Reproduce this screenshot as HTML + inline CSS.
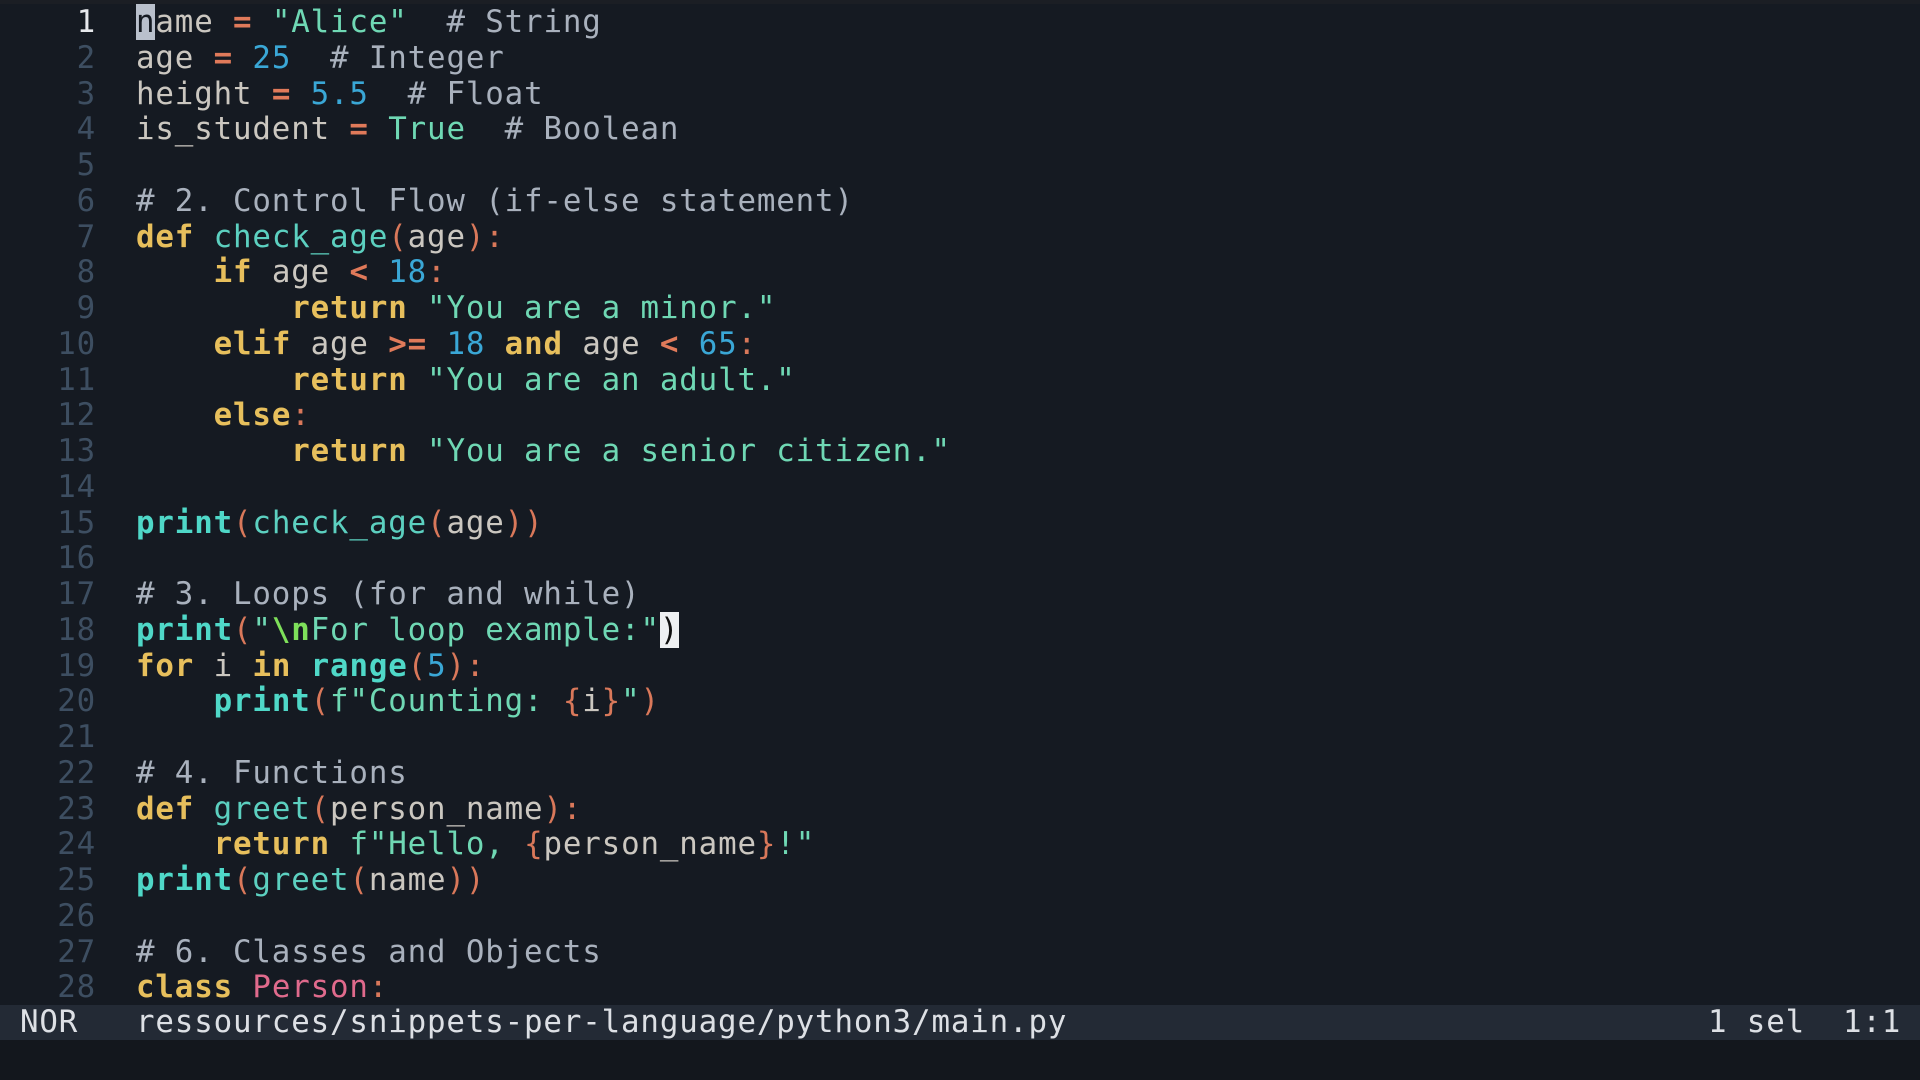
<!DOCTYPE html>
<html><head><meta charset="utf-8"><style>
html,body{margin:0;padding:0;width:1920px;height:1080px;overflow:hidden;background:#151a22;}
body{font-family:"DejaVu Sans Mono","Liberation Mono",monospace;font-size:30.8px;color:#cbc7c0;letter-spacing:0.86px}
#top{position:absolute;left:0;top:0;width:1920px;height:4px;background:#1b1e24}
#code{position:absolute;left:0;top:5px;}
.l{height:35.75px;line-height:35.75px;white-space:pre;position:relative}
.n{position:absolute;left:0;width:96px;text-align:right;color:#3d4e61}
.t{position:absolute;left:136px}
.cur{color:#e6e8ec}
.k{color:#e7bf5c;font-weight:bold}
.f{color:#4fd8c8;font-weight:bold}
.fn{color:#5cd0c0}
.s{color:#6fd8b4}
.e{color:#7ee05a;font-weight:bold}
.d{color:#3aa7d6}
.o{color:#e07a5a;font-weight:bold}
.p{color:#d9785a}
.c{color:#a9b1bd}
.cl{color:#e06a8c}
.bc{background:#b9c0cc;color:#151a22}
.wc{background:#eef0f2;color:#111}
#status{position:absolute;left:0;top:1005px;width:1920px;height:35px;background:#232a35;line-height:35px;white-space:pre;color:#dde0e5}
#bot{position:absolute;left:0;top:1040px;width:1920px;height:40px;background:#13171d}
</style></head><body>
<div id="top"></div>
<div id="code">
<div class="l"><span class="n cur">1</span><span class="t"><span class="bc">n</span>ame <span class="o">=</span> <span class="s">"Alice"</span>  <span class="c"># String</span></span></div>
<div class="l"><span class="n">2</span><span class="t">age <span class="o">=</span> <span class="d">25</span>  <span class="c"># Integer</span></span></div>
<div class="l"><span class="n">3</span><span class="t">height <span class="o">=</span> <span class="d">5.5</span>  <span class="c"># Float</span></span></div>
<div class="l"><span class="n">4</span><span class="t">is_student <span class="o">=</span> <span class="s">True</span>  <span class="c"># Boolean</span></span></div>
<div class="l"><span class="n">5</span><span class="t"></span></div>
<div class="l"><span class="n">6</span><span class="t"><span class="c"># 2. Control Flow (if-else statement)</span></span></div>
<div class="l"><span class="n">7</span><span class="t"><span class="k">def</span> <span class="fn">check_age</span><span class="p">(</span>age<span class="p">):</span></span></div>
<div class="l"><span class="n">8</span><span class="t">    <span class="k">if</span> age <span class="o">&lt;</span> <span class="d">18</span><span class="p">:</span></span></div>
<div class="l"><span class="n">9</span><span class="t">        <span class="k">return</span> <span class="s">"You are a minor."</span></span></div>
<div class="l"><span class="n">10</span><span class="t">    <span class="k">elif</span> age <span class="o">&gt;=</span> <span class="d">18</span> <span class="k">and</span> age <span class="o">&lt;</span> <span class="d">65</span><span class="p">:</span></span></div>
<div class="l"><span class="n">11</span><span class="t">        <span class="k">return</span> <span class="s">"You are an adult."</span></span></div>
<div class="l"><span class="n">12</span><span class="t">    <span class="k">else</span><span class="p">:</span></span></div>
<div class="l"><span class="n">13</span><span class="t">        <span class="k">return</span> <span class="s">"You are a senior citizen."</span></span></div>
<div class="l"><span class="n">14</span><span class="t"></span></div>
<div class="l"><span class="n">15</span><span class="t"><span class="f">print</span><span class="p">(</span><span class="fn">check_age</span><span class="p">(</span>age<span class="p">))</span></span></div>
<div class="l"><span class="n">16</span><span class="t"></span></div>
<div class="l"><span class="n">17</span><span class="t"><span class="c"># 3. Loops (for and while)</span></span></div>
<div class="l"><span class="n">18</span><span class="t"><span class="f">print</span><span class="p">(</span><span class="s">"</span><span class="e">\n</span><span class="s">For loop example:"</span><span class="wc">)</span></span></div>
<div class="l"><span class="n">19</span><span class="t"><span class="k">for</span> i <span class="k">in</span> <span class="f">range</span><span class="p">(</span><span class="d">5</span><span class="p">):</span></span></div>
<div class="l"><span class="n">20</span><span class="t">    <span class="f">print</span><span class="p">(</span><span class="s">f"Counting: </span><span class="p">{</span>i<span class="p">}</span><span class="s">"</span><span class="p">)</span></span></div>
<div class="l"><span class="n">21</span><span class="t"></span></div>
<div class="l"><span class="n">22</span><span class="t"><span class="c"># 4. Functions</span></span></div>
<div class="l"><span class="n">23</span><span class="t"><span class="k">def</span> <span class="fn">greet</span><span class="p">(</span>person_name<span class="p">):</span></span></div>
<div class="l"><span class="n">24</span><span class="t">    <span class="k">return</span> <span class="s">f"Hello, </span><span class="p">{</span>person_name<span class="p">}</span><span class="s">!"</span></span></div>
<div class="l"><span class="n">25</span><span class="t"><span class="f">print</span><span class="p">(</span><span class="fn">greet</span><span class="p">(</span>name<span class="p">))</span></span></div>
<div class="l"><span class="n">26</span><span class="t"></span></div>
<div class="l"><span class="n">27</span><span class="t"><span class="c"># 6. Classes and Objects</span></span></div>
<div class="l"><span class="n">28</span><span class="t"><span class="k">class</span> <span class="cl">Person</span><span class="p">:</span></span></div>
</div>
<div id="status"><span style="position:absolute;left:20px">NOR</span><span style="position:absolute;left:136px">ressources/snippets-per-language/python3/main.py</span><span style="position:absolute;left:1708px">1 sel</span><span style="position:absolute;left:1843px">1:1</span></div>
<div id="bot"></div>
</body></html>
